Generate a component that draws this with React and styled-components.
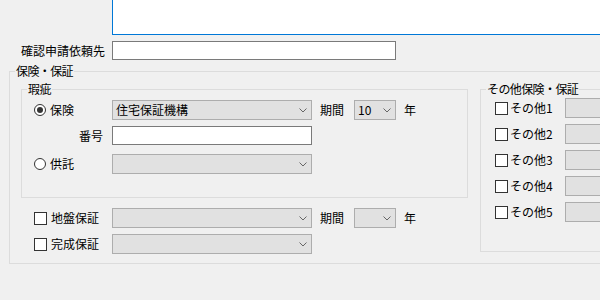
import styled, { createGlobalStyle } from 'styled-components'

const GlobalStyle = createGlobalStyle`
  html, body {
    margin: 0;
    padding: 0;
    background: #f0f0f0;
  }
  body {
    font-family: "Noto Sans CJK JP", "Noto Sans", sans-serif;
    font-size: 12px;
    color: #000;
  }
`

const Page = styled.div`
  width: 600px;
  height: 300px;
  overflow: hidden;
  background: #f0f0f0;
`

const MemoRow = styled.div`
  display: flex;
  padding-left: 112px;
`

const Memo = styled.div`
  flex-shrink: 0;
  width: 520px;
  height: 35px;
  box-sizing: border-box;
  background: #fff;
  border: 1px solid #0078d7;
  border-top: none;
`

const LabelRow = styled.div`
  display: flex;
  align-items: center;
  margin-top: 6px;
  height: 19px;
`

const RowLabel = styled.div`
  width: 105px;
  margin-right: 7px;
  text-align: right;
  white-space: nowrap;
  line-height: 14px;
`

const TextBox = styled.div`
  flex-shrink: 0;
  width: ${p => p.$w || 200}px;
  height: 19px;
  box-sizing: border-box;
  background: #fff;
  border: 1px solid #7a7a7a;
`

const Group = styled.div`
  position: relative;
  flex-shrink: 0;
  box-sizing: border-box;
  border: 1px solid #dcdcdc;
`

const GroupTitle = styled.span`
  position: absolute;
  top: -8px;
  left: 5px;
  padding: 0 1px;
  background: #f0f0f0;
  line-height: 14px;
  white-space: nowrap;
  letter-spacing: -0.6px;
`

const OuterGroup = styled(Group)`
  width: 620px;
  margin: 11px 0 0 9px;
  display: flex;
  align-items: flex-start;
  padding: 17px 0 9px 11px;
`

const LeftColumn = styled.div`
  width: 447px;
  flex-shrink: 0;
`

const DefectGroup = styled(Group)`
  width: 447px;
  padding: 10px 0 23px 12px;
`

const OtherGroup = styled(Group)`
  width: 140px;
  margin-left: 12px;
  padding: 8px 0 29px 14px;
  display: flex;
  flex-direction: column;
  gap: 6px;
`

const FieldRow = styled.div`
  display: grid;
  grid-template-columns: 78px 200px 42px 42px auto;
  align-items: center;
  height: ${p => p.$h || 20}px;
  margin-top: ${p => p.$mt || 0}px;
`

const LowerRows = styled.div`
  margin: 10px 0 0 13px;
`

const Choice = styled.label`
  display: flex;
  align-items: center;
  gap: 4px;
  white-space: nowrap;
  line-height: 14px;
`

const Radio = styled.span`
  width: 12px;
  height: 12px;
  box-sizing: border-box;
  border: 1px solid #333;
  border-radius: 50%;
  background: #fff;
  display: flex;
  align-items: center;
  justify-content: center;

  &::after {
    content: '';
    width: 6px;
    height: 6px;
    border-radius: 50%;
    background: ${p => (p.$checked ? '#333' : 'transparent')};
  }
`

const Check = styled.span`
  width: 13px;
  height: 13px;
  box-sizing: border-box;
  border: 1px solid #333;
  background: #fff;
  flex-shrink: 0;
`

const FieldLabel = styled.span`
  justify-self: ${p => (p.$right ? 'end' : 'start')};
  padding-left: ${p => p.$pl || 0}px;
  padding-right: ${p => p.$pr || 0}px;
  white-space: nowrap;
  line-height: 14px;
`

const Combo = styled.div`
  width: ${p => p.$w || 200}px;
  height: 20px;
  box-sizing: border-box;
  background: #e1e1e1;
  border: 1px solid #adadad;
  display: flex;
  align-items: center;
  justify-content: space-between;
  padding: 0 4px 0 3px;
  line-height: 14px;
  white-space: nowrap;
`

const OtherRow = styled.div`
  display: grid;
  grid-template-columns: 15px 55px 60px;
  align-items: center;
  height: 20px;
`

const DisabledBox = styled.div`
  width: 60px;
  height: 20px;
  box-sizing: border-box;
  background: #e1e1e1;
  border: 1px solid #adadad;
`

const Chevron = () => (
  <svg width="8" height="5" viewBox="0 0 8 5">
    <path d="M0.5 0.5 L4 4 L7.5 0.5" fill="none" stroke="#666" strokeWidth="1" />
  </svg>
)

const ComboBox = ({ value, w }) => (
  <Combo $w={w}>
    <span>{value}</span>
    <Chevron />
  </Combo>
)

const others = ['その他1', 'その他2', 'その他3', 'その他4', 'その他5']

const App = () => {
  return (
    <Page>
      <GlobalStyle />
      <MemoRow>
        <Memo />
      </MemoRow>

      <LabelRow>
        <RowLabel>確認申請依頼先</RowLabel>
        <TextBox $w={284} />
      </LabelRow>

      <OuterGroup>
        <GroupTitle>保険・保証</GroupTitle>

        <LeftColumn>
          <DefectGroup>
            <GroupTitle>瑕疵</GroupTitle>
            <FieldRow>
              <Choice><Radio $checked />保険</Choice>
              <ComboBox value="住宅保証機構" />
              <FieldLabel $pl={8}>期間</FieldLabel>
              <ComboBox value="10" w={42} />
              <FieldLabel $pl={8}>年</FieldLabel>
            </FieldRow>
            <FieldRow $h={19} $mt={6}>
              <FieldLabel $right $pr={9}>番号</FieldLabel>
              <TextBox />
            </FieldRow>
            <FieldRow $mt={9}>
              <Choice><Radio />供託</Choice>
              <ComboBox value="" />
            </FieldRow>
          </DefectGroup>

          <LowerRows>
            <FieldRow>
              <Choice><Check />地盤保証</Choice>
              <ComboBox value="" />
              <FieldLabel $pl={8}>期間</FieldLabel>
              <ComboBox value="" w={42} />
              <FieldLabel $pl={8}>年</FieldLabel>
            </FieldRow>
            <FieldRow $mt={6}>
              <Choice><Check />完成保証</Choice>
              <ComboBox value="" />
            </FieldRow>
          </LowerRows>
        </LeftColumn>

        <OtherGroup>
          <GroupTitle>その他保険・保証</GroupTitle>
          {others.map(name => (
            <OtherRow key={name}>
              <Check />
              <FieldLabel>{name}</FieldLabel>
              <DisabledBox />
            </OtherRow>
          ))}
        </OtherGroup>
      </OuterGroup>
    </Page>
  )
}

export default App
